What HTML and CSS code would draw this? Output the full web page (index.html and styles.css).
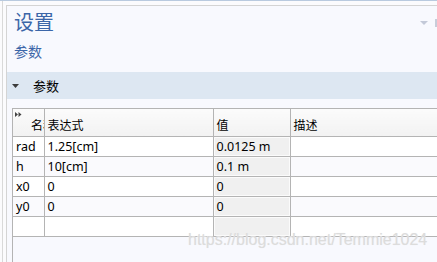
FILE: index.html
```html
<!DOCTYPE html>
<html lang="zh">
<head>
<meta charset="utf-8">
<link rel="stylesheet" href="styles.css">
</head>
<body>
<div class="app">
  <div class="gutter"></div>
  <div class="panel">
    <div class="titlebar">
      <div class="titles">
        <div class="title">设置</div>
        <div class="subtitle">参数</div>
      </div>
      <svg class="menu" width="18" height="10" viewBox="0 0 18 10">
        <polygon points="0,2 8,2 4,6" fill="#c3c9d8"/>
        <rect x="15" y="0" width="2" height="8" fill="#c8cdda"/>
      </svg>
    </div>
    <div class="section">
      <svg class="caret" width="8" height="5" viewBox="0 0 8 5"><polygon points="0,0 7,0 3.5,4" fill="#3c3c3c"/></svg>
      <span class="section-label">参数</span>
    </div>
    <div class="grid-view">
      <table class="grid">
        <colgroup>
          <col class="c-name"><col class="c-expr"><col class="c-val"><col class="c-desc">
        </colgroup>
        <thead>
          <tr>
            <th class="h-name"><svg class="expand" width="7" height="5" viewBox="0 0 7 5"><polygon points="0,0 3,2.5 0,5" fill="#444"/><polygon points="3.5,0 6.5,2.5 3.5,5" fill="#444"/></svg><span class="h-name-text">名称</span></th>
            <th>表达式</th>
            <th>值</th>
            <th>描述</th>
          </tr>
        </thead>
        <tbody>
          <tr><td>rad</td><td>1.25[cm]</td><td class="val">0.0125 m</td><td></td></tr>
          <tr class="alt"><td>h</td><td>10[cm]</td><td class="val">0.1 m</td><td></td></tr>
          <tr><td>x0</td><td>0</td><td class="val">0</td><td></td></tr>
          <tr class="alt"><td>y0</td><td>0</td><td class="val">0</td><td></td></tr>
          <tr><td></td><td></td><td class="val"></td><td></td></tr>
        </tbody>
      </table>
    </div>
  </div>
  <div class="watermark">https://blog.csdn.net/Temmie1024</div>
</div>
</body>
</html>
```

FILE: styles.css
```css
html, body {
  margin: 0;
  padding: 0;
  width: 437px;
  height: 262px;
  overflow: hidden;
  background: #fbfbfd;
}

.app {
  position: relative;
  display: flex;
  height: 261px;
  border-top: 1px solid #b9cadf;
  font-family: "Noto Sans", "Noto Sans CJK SC", sans-serif;
  overflow: hidden;
}

.gutter {
  width: 2px;
  flex: none;
  border-right: 1px solid #d9d9d9;
  margin-right: 3px;
}

.panel {
  flex: 1;
  margin-top: 4px;
  border-top: 1px solid #d4d4d4;
  border-left: 1px solid #d4d4d4;
  background: #f8f9fe;
  display: flex;
  flex-direction: column;
  overflow: hidden;
}

.titlebar {
  display: flex;
  justify-content: space-between;
  align-items: flex-start;
  height: 66px;
  flex: none;
}

.titles {
  padding: 3px 0 0 7px;
}

.title {
  font-family: "Noto Sans CJK SC", sans-serif;
  font-size: 20px;
  line-height: 26px;
  color: #3c66a8;
}

.subtitle {
  font-family: "Noto Sans CJK SC", sans-serif;
  font-size: 14px;
  line-height: 18px;
  margin-top: 7px;
  color: #3c66a8;
}

.menu {
  margin: 13px -1px 0 0;
}

.section {
  height: 27px;
  flex: none;
  background: #dde7f2;
  display: flex;
  align-items: center;
}

.caret {
  margin-left: 5px;
  margin-top: 1px;
}

.section-label {
  font-family: "Noto Sans CJK SC", sans-serif;
  font-size: 13px;
  color: #000;
  margin-left: 13px;
}

.grid-view {
  flex: 1;
  margin: 9px 0 0 5px;
  border-left: 1px solid #b4b4b4;
  border-top: 1px solid #b4b4b4;
}

.grid {
  border-collapse: collapse;
  table-layout: fixed;
  width: 440px;
  font-size: 12.5px;
  color: #000;
}

.c-name { width: 31px; }
.c-expr { width: 169px; }
.c-val { width: 77px; }

.grid th,
.grid td {
  border-right: 1px solid #b4b4b4;
  border-bottom: 1px solid #b4b4b4;
  padding: 0 0 0 3px;
  text-align: left;
  white-space: nowrap;
  overflow: hidden;
  font-weight: normal;
}

.grid th {
  height: 24px;
  vertical-align: bottom;
  padding-bottom: 3px;
  background: linear-gradient(#fbfbfb, #f2f2f2);
  font-family: "Noto Sans CJK SC", sans-serif;
  font-size: 12px;
  line-height: 17px;
}

.grid th.h-name {
  position: relative;
  padding-left: 0;
}

.expand {
  position: absolute;
  left: 2px;
  top: 3px;
}

.h-name-text {
  display: block;
  margin-left: 18px;
  width: 13px;
  overflow: hidden;
  white-space: nowrap;
}

.grid td {
  height: 19px;
  line-height: 19px;
  background: #fff;
}

.grid tr.alt td {
  background: #fafafd;
}

.grid td.val,
.grid tr.alt td.val {
  background: #f0f0f0;
  box-shadow: inset 0 0 0 1px #fbfbfb;
}

.watermark {
  position: absolute;
  left: 188px;
  top: 230px;
  font-family: "Liberation Sans", Arial, sans-serif;
  font-size: 16px;
  color: #dcdcdc;
  text-shadow: 0 0 1px #ececec;
  white-space: nowrap;
}
```
